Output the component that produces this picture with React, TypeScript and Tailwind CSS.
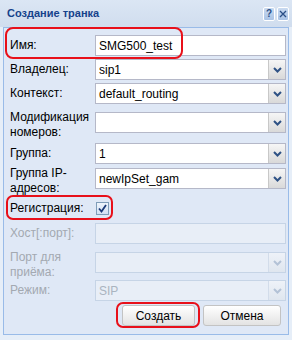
import React from "react";

const font = { fontFamily: '"Liberation Sans", Arial, sans-serif' };

function Chevron({ disabled }: { disabled?: boolean }) {
  return (
    <svg width="9" height="6" viewBox="0 0 9 6">
      <path d="M1 1 L4.5 4.5 L8 1" fill="none" stroke={disabled ? "#b3c2d6" : "#2f5285"} strokeWidth="2" />
    </svg>
  );
}

function TextField({ value, disabled }: { value?: string; disabled?: boolean }) {
  return (
    <div
      className={
        "ml-auto flex h-[21px] w-[191px] items-center border px-[3px] text-[12px] " +
        (disabled ? "border-[#c6d4e6] bg-[#e8eef7] text-[#aab4c0]" : "border-[#b5b8c8] bg-white text-black")
      }
    >
      {value}
    </div>
  );
}

function SelectField({ value, disabled }: { value?: string; disabled?: boolean }) {
  return (
    <div
      className={
        "ml-auto flex h-[21px] w-[191px] items-stretch border text-[12px] " +
        (disabled ? "border-[#c6d4e6] bg-[#e8eef7] text-[#aab4c0]" : "border-[#b5b8c8] bg-white text-black")
      }
    >
      <div className="flex grow items-center px-[3px]">{value}</div>
      <div
        className={
          "flex w-[17px] items-center justify-center border-l " +
          (disabled
            ? "border-[#d2dcea] bg-gradient-to-b from-[#eef2f8] to-[#dfe6ef]"
            : "border-[#c8c8c8] bg-gradient-to-b from-[#f6f6f6] to-[#d9d9d9]")
        }
      >
        <Chevron disabled={disabled} />
      </div>
    </div>
  );
}

function Row({ label, children, className, disabled }: { label: string; children: React.ReactNode; className?: string; disabled?: boolean }) {
  return (
    <div className={"flex items-center " + (className || "")}>
      <div className={"w-[85px] text-[12px] leading-[15px] " + (disabled ? "text-[#a3a9b1]" : "text-black")}>{label}</div>
      {children}
    </div>
  );
}

function TallRow({ lines, children, className, disabled }: { lines: string[]; children: React.ReactNode; className?: string; disabled?: boolean }) {
  return (
    <div className={"flex h-[30px] items-start " + (className || "")}>
      <div className={"w-[85px] text-[12px] leading-[15px] " + (disabled ? "text-[#a3a9b1]" : "text-black")}>
        {lines.map((l) => (
          <div key={l}>{l}</div>
        ))}
      </div>
      <div className="ml-auto mt-[2px]">{children}</div>
    </div>
  );
}

export default function App() {
  return (
    <div className="relative h-[340px] w-[292px] overflow-hidden bg-[#e6eef8]" style={font}>
      <div className="flex h-[27px] items-center justify-between bg-gradient-to-b from-[#dbe6f4] to-[#d0ddee] pl-[7px] pr-[3px]">
        <span className="text-[11px] font-bold text-[#15428b]">Создание транка</span>
        <div className="flex gap-[2px]">
          <div className="flex h-[14px] w-[12px] items-center justify-center rounded-[2px] border border-white bg-gradient-to-b from-[#c9daf0] to-[#a9c3e6] text-[10px] font-bold leading-none text-[#2b4f86]">
            ?
          </div>
          <div className="flex h-[14px] w-[12px] items-center justify-center rounded-[2px] border border-white bg-gradient-to-b from-[#c9daf0] to-[#a9c3e6]">
            <svg width="8" height="8" viewBox="0 0 8 8">
              <path d="M1 1 L7 7 M7 1 L1 7" stroke="#2b4f86" strokeWidth="1.3" />
            </svg>
          </div>
        </div>
      </div>

      <div className="mx-[3px] box-border flex h-[308px] flex-col border border-[#99bbe8] bg-[#dfe8f6] pl-[6px] pr-[2px]">
        <Row label="Имя:" className="mt-[7px]">
          <TextField value="SMG500_test" />
        </Row>
        <Row label="Владелец:" className="mt-[3px]">
          <SelectField value="sip1" />
        </Row>
        <Row label="Контекст:" className="mt-[3px]">
          <SelectField value="default_routing" />
        </Row>
        <TallRow lines={["Модификация", "номеров:"]} className="mt-[6px]">
          <SelectField />
        </TallRow>
        <Row label="Группа:" className="mt-[3px]">
          <SelectField value="1" />
        </Row>
        <TallRow lines={["Группа IP-", "адресов:"]} className="mt-[2px]">
          <SelectField value="newIpSet_gam" />
        </TallRow>
        <div className="mt-[4px] flex h-[16px] items-center">
          <div className="w-[85px] text-[12px] text-black">Регистрация:</div>
          <div className="ml-[1px] flex h-[13px] w-[13px] items-center justify-center border border-[#7f9db9] bg-gradient-to-b from-[#eef4fc] to-[#d3e1f3]">
            <svg width="9" height="9" viewBox="0 0 9 9">
              <path d="M1 4.5 L3.5 7.5 L8 1" fill="none" stroke="#1c3a78" strokeWidth="1.8" />
            </svg>
          </div>
        </div>
        <Row label="Хост[:порт]:" className="mt-[7px]" disabled>
          <TextField disabled />
        </Row>
        <TallRow lines={["Порт для", "приёма:"]} className="mt-[6px]" disabled>
          <SelectField disabled />
        </TallRow>
        <Row label="Режим:" disabled>
          <SelectField value="SIP" disabled />
        </Row>
        <div className="mt-[4px] flex justify-end gap-[8px] pr-[5px]">
          <button className="h-[21px] w-[73px] rounded-[3px] border border-[#c3c3c3] bg-gradient-to-b from-white to-[#e3e3e3] text-[12px] text-black">
            Создать
          </button>
          <button className="h-[21px] w-[78px] rounded-[3px] border border-[#c3c3c3] bg-gradient-to-b from-white to-[#e3e3e3] text-[12px] text-black">
            Отмена
          </button>
        </div>
      </div>

      <div className="pointer-events-none absolute left-[5px] top-[27px] h-[32px] w-[178px] rounded-[8px] border-[2.5px] border-[#e8101a]" />
      <div className="pointer-events-none absolute left-[6px] top-[195px] h-[25px] w-[107px] rounded-[7px] border-[2.5px] border-[#e8101a]" />
      <div className="pointer-events-none absolute left-[116px] top-[302px] h-[26px] w-[84px] rounded-[7px] border-[2.5px] border-[#e8101a]" />
    </div>
  );
}
